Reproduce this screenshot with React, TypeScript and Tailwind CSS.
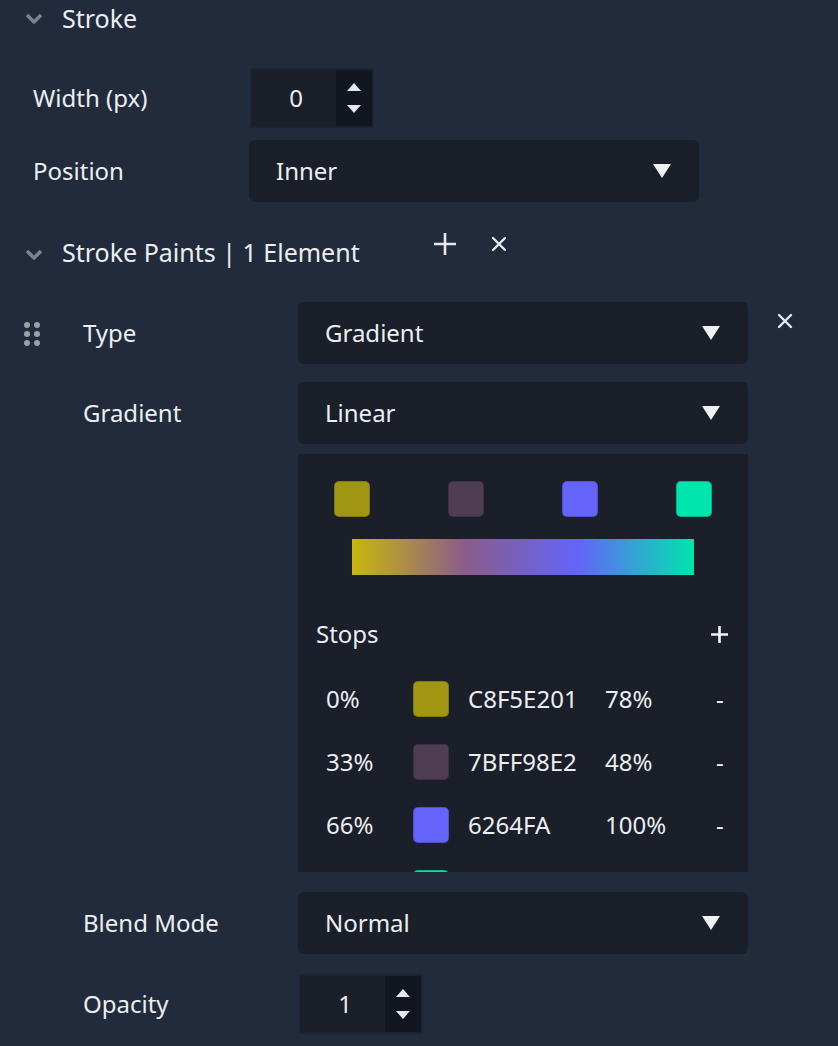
import React from "react";

const STOPS = [
  { pos: "0%", color: "#a09612", hex: "C8F5E201", alpha: "78%" },
  { pos: "33%", color: "#4f3d53", hex: "7BFF98E2", alpha: "48%" },
  { pos: "66%", color: "#6464fa", hex: "6264FA", alpha: "100%" },
  { pos: "100%", color: "#00e5ad", hex: "00E5AD", alpha: "100%" },
];

function Chevron() {
  return (
    <svg width="20" height="14" viewBox="0 0 20 14" className="blur-[0.7px]">
      <polyline points="3,4 10,11 17,4" fill="none" stroke="#7b8290" strokeWidth="3.5" strokeLinejoin="round" />
    </svg>
  );
}

function Caret() {
  return (
    <svg width="18" height="14" viewBox="0 0 18 14">
      <polygon points="0,0 18,0 9,14" fill="#f1f1f4" />
    </svg>
  );
}

function Cross({ size = 18 }: { size?: number }) {
  return (
    <svg width={size} height={size} viewBox="0 0 18 18">
      <path d="M3 3 15 15M15 3 3 15" stroke="#e5e7eb" strokeWidth="2.4" strokeLinecap="round" />
    </svg>
  );
}

function Plus() {
  return (
    <svg width="24" height="24" viewBox="0 0 24 24">
      <path d="M12 1v22M1 12h22" stroke="#e5e7eb" strokeWidth="2.6" />
    </svg>
  );
}

function NumberInput({ value }: { value: string }) {
  return (
    <div className="flex h-[60px] w-[124px] border-2 border-[#1d2330] bg-[#1a1f29]">
      <div className="flex flex-1 items-center justify-center pl-1">{value}</div>
      <div className="flex w-[36px] flex-col items-center justify-between bg-[#121620] py-[13px]">
        <svg width="14" height="8" viewBox="0 0 14 8"><polygon points="0,8 14,8 7,0" fill="#e5e7eb" /></svg>
        <svg width="14" height="8" viewBox="0 0 14 8"><polygon points="0,0 14,0 7,8" fill="#e5e7eb" /></svg>
      </div>
    </div>
  );
}

function Select({ value }: { value: string }) {
  return (
    <div className="flex h-[62px] w-[450px] items-center justify-between rounded-md bg-[#1a1f29] pl-[27px] pr-[28px]">
      <span>{value}</span>
      <Caret />
    </div>
  );
}

export default function App() {
  return (
    <div
      className="h-[1046px] w-[838px] overflow-hidden bg-[#222b3b] text-[24px] leading-[32px] text-[#eceef2]"
      style={{ fontFamily: "'Noto Sans', 'Open Sans', sans-serif" }}
    >
      {/* Stroke */}
      <div className="flex h-[36px] items-center pl-[24px]">
        <Chevron />
        <span className="ml-[18px] text-[25px]">Stroke</span>
      </div>

      <div className="mt-[32px] flex items-center pl-[33px]">
        <span className="w-[217px]">Width (px)</span>
        <NumberInput value="0" />
      </div>

      <div className="mt-[12px] flex items-center pl-[33px]">
        <span className="w-[216px]">Position</span>
        <Select value="Inner" />
      </div>

      {/* Stroke Paints */}
      <div className="mt-[30px] flex h-[40px] items-center pl-[24px]">
        <div className="pt-[4px]"><Chevron /></div>
        <span className="ml-[18px] w-[371px] text-[25px]">Stroke Paints | 1 Element</span>
        <div className="mb-[16px]"><Plus /></div>
        <div className="mb-[16px] ml-[33px]"><Cross /></div>
      </div>

      <div className="mt-[30px] flex">
        <div className="flex w-[83px] justify-start pl-[24px] pt-[20px]">
          <div className="grid h-[24px] grid-cols-2 gap-x-[4px] gap-y-[3px]">
            {Array.from({ length: 6 }).map((_, i) => (
              <span key={i} className="h-[6px] w-[6px] rounded-full bg-[#9aa0aa]" />
            ))}
          </div>
        </div>
        <div className="flex flex-col">
          <div className="flex items-center">
            <span className="w-[215px]">Type</span>
            <Select value="Gradient" />
            <div className="mb-[24px] ml-[28px]"><Cross /></div>
          </div>

          <div className="mt-[18px] flex items-center">
            <span className="w-[215px]">Gradient</span>
            <Select value="Linear" />
          </div>

          <div className="mt-[10px] flex">
            <span className="w-[215px]" />
            <div className="h-[418px] w-[450px] overflow-hidden bg-[#1a1f29]">
              <div className="flex justify-between px-[36px] pt-[27px]">
                {STOPS.map((s) => (
                  <span key={s.hex} className="h-[36px] w-[36px] rounded-[5px] border border-black/20" style={{ background: s.color }} />
                ))}
              </div>
              <div
                className="mx-[54px] mt-[22px] h-[36px]"
                style={{ background: "linear-gradient(90deg,#c8b80c 0%,#8a5c8a 33%,#6464fa 66%,#00e5ad 100%)" }}
              />
              <div className="mt-[41px] flex h-[36px] items-center justify-between pl-[18px] pr-[20px]">
                <span>Stops</span>
                <svg width="17" height="17" viewBox="0 0 17 17"><path d="M8.5 0v17M0 8.5h17" stroke="#f3f4f6" strokeWidth="2.6" /></svg>
              </div>
              <div className="mt-[29px] flex flex-col gap-[27px]">
                {STOPS.map((s) => (
                  <div key={s.hex} className="flex h-[36px] items-center">
                    <span className="w-[115px] pl-[28px]">{s.pos}</span>
                    <span className="h-[36px] w-[36px] shrink-0 rounded-[5px] border border-black/20" style={{ background: s.color }} />
                    <span className="w-[156px] pl-[19px]">{s.hex}</span>
                    <span className="w-[111px]">{s.alpha}</span>
                    <span>-</span>
                  </div>
                ))}
              </div>
            </div>
          </div>

          <div className="mt-[20px] flex items-center">
            <span className="w-[215px]">Blend Mode</span>
            <Select value="Normal" />
          </div>

          <div className="mt-[20px] flex items-center">
            <span className="w-[216px]">Opacity</span>
            <NumberInput value="1" />
          </div>
        </div>
      </div>
    </div>
  );
}
